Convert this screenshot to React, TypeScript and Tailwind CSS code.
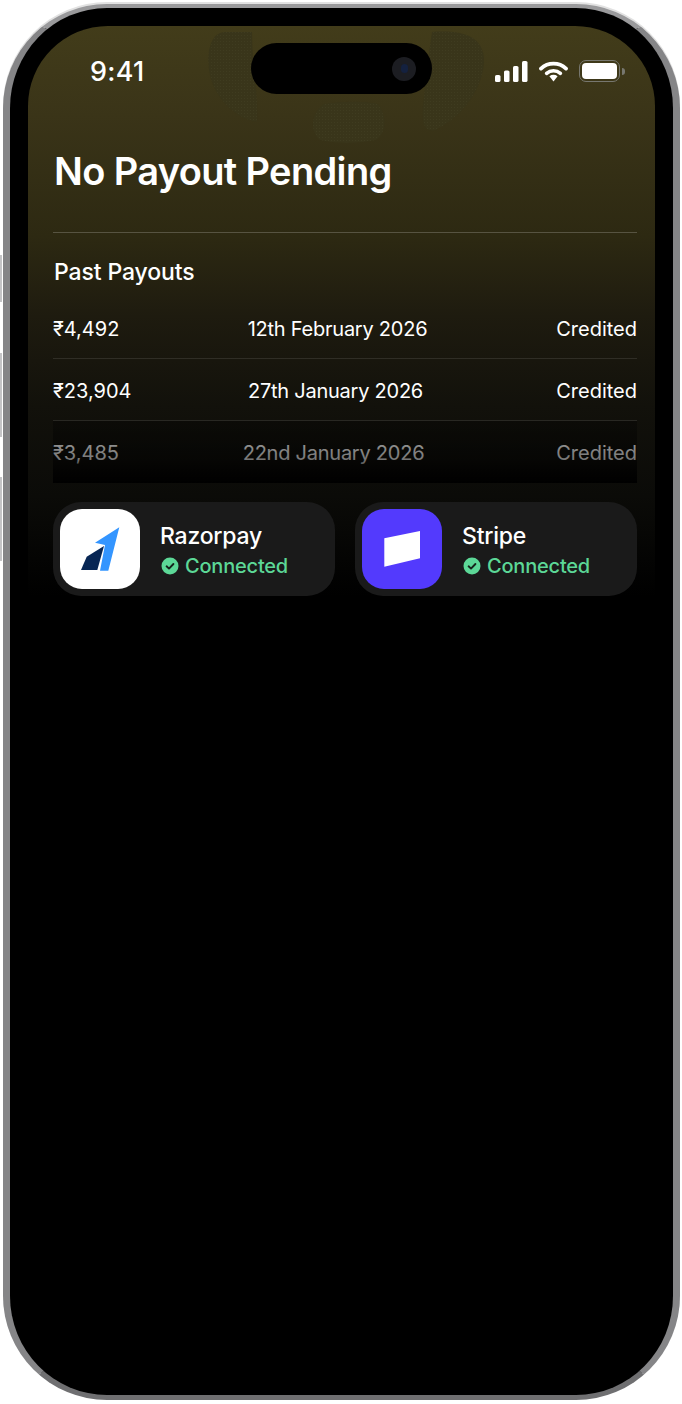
const payouts = [
  { amount: "₹4,492", date: "12th February 2026", dateClass: "pl-[5px]" },
  { amount: "₹23,904", date: "27th January 2026", dateClass: "pl-[1px]" },
  { amount: "₹3,485", date: "22nd January 2026", dateClass: "pr-[3px]" },
];

const Check = () => (
  <svg width="18" height="18" viewBox="0 0 18 18" className="shrink-0">
    <circle cx="9" cy="9" r="8.5" fill="#5cd897" />
    <path d="M5.6 9.3l2.4 2.3 4.4-4.6" fill="none" stroke="#16241c" strokeWidth="1.9" strokeLinecap="round" strokeLinejoin="round" />
  </svg>
);

const Gateway = ({ name, icon, iconClass }: { name: string; icon: React.ReactNode; iconClass: string }) => (
  <div className="flex h-[94px] items-center gap-5 rounded-[28px] bg-[#1a1a1a] pl-[7px]">
    <div className={`h-[80px] w-[80px] shrink-0 rounded-[22px] ${iconClass}`}>{icon}</div>
    <div className="pt-[2px]">
      <div className="text-[23px] leading-[30px] font-medium tracking-[-0.01em] text-white">{name}</div>
      <div className="mt-[1px] flex items-center gap-[6px] pl-[1px] text-[20px] leading-[28px] font-medium tracking-[-0.01em] text-[#5cd897]">
        <Check />
        Connected
      </div>
    </div>
  </div>
);

const StatusIcons = () => (
  <div className="flex items-center">
    {/* signal */}
    <svg width="33" height="21" viewBox="0 0 33 21">
      <rect x="0" y="14" width="5.5" height="7" rx="1.6" fill="#fff" />
      <rect x="9" y="9.5" width="5.5" height="11.5" rx="1.6" fill="#fff" />
      <rect x="18" y="5" width="5.5" height="16" rx="1.6" fill="#fff" />
      <rect x="27" y="0" width="5.5" height="21" rx="1.6" fill="#fff" />
    </svg>
    {/* wifi */}
    <svg width="29" height="21" viewBox="0 0 29 21" className="ml-[11px]">
      <path d="M2 7.6C9 1 20 1 27 7.6" fill="none" stroke="#fff" strokeWidth="3.8" strokeLinecap="round" />
      <path d="M7.6 12.4C11.6 8.8 17.4 8.8 21.4 12.4" fill="none" stroke="#fff" strokeWidth="3.6" strokeLinecap="round" />
      <path d="M10.4 15.2C12.8 13.4 16.2 13.4 18.6 15.2L14.5 20.4Z" fill="#fff" />
    </svg>
    {/* battery */}
    <div className="ml-[11px] flex items-center">
      <div className="h-[22px] w-[41px] rounded-[7px] border-[1.5px] border-[#77776f] p-[2px]">
        <div className="h-full w-full rounded-[4px] bg-white" />
      </div>
      <div className="ml-[2px] h-[7px] w-[3px] rounded-r-full bg-[#77776f]" />
    </div>
  </div>
);

const App = () => {
  return (
    <div className="relative h-[1404px] w-[682px] overflow-hidden bg-white pt-[4px] pl-[3px] font-['Inter',sans-serif]">
      {/* side buttons */}
      <div className="absolute top-[255px] left-0 h-[47px] w-[2px] bg-[#c4c4c6]" />
      <div className="absolute top-[353px] left-0 h-[84px] w-[2px] bg-[#c4c4c6]" />
      <div className="absolute top-[477px] left-0 h-[84px] w-[2px] bg-[#c4c4c6]" />

      {/* phone frame */}
      <div className="flex h-[1396px] w-[677px] flex-col rounded-[104px] border-x-[7px] border-t-[4px] border-b-[5px] border-x-[#858587] border-t-[#9a9a9c] border-b-[#6f6f71] bg-black px-[18px] pt-[18px] shadow-[0_-2px_0_0_#e2e2e2]">
        {/* screen */}
        <div className="relative h-[570px] w-[627px] rounded-t-[80px] bg-[linear-gradient(180deg,#423c1a_0px,#3a3418_90px,#2d2912_210px,#1e1b0f_290px,#12110b_380px,#0b0b08_470px,#000_570px)] pl-[25px]">
          {/* speckled blobs behind the island */}
          <svg width="627" height="140" viewBox="0 0 627 140" className="absolute top-0 left-0">
            <defs>
              <pattern id="dots" width="3" height="3" patternUnits="userSpaceOnUse">
                <rect width="1" height="1" fill="#6f6a4c" opacity="0.12" />
              </pattern>
            </defs>
            <path d="M196 6C178 8 178 40 184 56C192 78 212 94 229 96C231 70 224 40 224 6Z" fill="#39351a" />
            <path d="M196 6C178 8 178 40 184 56C192 78 212 94 229 96C231 70 224 40 224 6Z" fill="url(#dots)" />
            <path d="M404 6C430 4 457 8 456 36C454 66 432 92 408 104C392 108 394 88 396 70C399 40 402 20 404 6Z" fill="#39351a" />
            <path d="M404 6C430 4 457 8 456 36C454 66 432 92 408 104C392 108 394 88 396 70C399 40 402 20 404 6Z" fill="url(#dots)" />
            <path d="M296 78C312 75 340 75 350 78C358 88 360 106 348 114C330 118 306 118 292 114C280 104 284 86 296 78Z" fill="#39351a" />
            <path d="M296 78C312 75 340 75 350 78C358 88 360 106 348 114C330 118 306 118 292 114C280 104 284 86 296 78Z" fill="url(#dots)" />
          </svg>

          {/* dynamic island */}
          <div className="absolute top-[17px] left-[223px] flex h-[51px] w-[181px] items-center justify-end rounded-full bg-black pr-[16px]">
            <div className="flex h-[24px] w-[24px] items-center justify-center rounded-full bg-[#1c1d22]">
              <div className="h-[9px] w-[7px] rounded-full bg-[#14213f]" />
            </div>
          </div>

          {/* status bar */}
          <div className="relative flex h-[90px] items-center justify-between pr-[30px] pl-[37px]">
            <span className="pt-[2px] text-[27px] font-medium tracking-[0.01em] text-white">9:41</span>
            <StatusIcons />
          </div>

          <div className="relative w-[584px]">
            <h1 className="mt-[32px] pl-[1px] text-[38px] leading-[46px] font-semibold tracking-[-0.017em] text-white">
              No Payout Pending
            </h1>
            <div className="mt-[38px] h-px bg-white/20" />
            <h2 className="mt-[24px] pl-[1px] text-[23px] leading-[30px] font-medium tracking-[-0.005em] text-white">
              Past Payouts
            </h2>

            <div className="mt-[10px]">
              {payouts.map((p, i) => (
                <div
                  key={p.amount}
                  className={`relative grid h-[62px] grid-cols-[150px_264px_170px] items-center text-[20px] text-white ${
                    i < payouts.length - 1 ? "border-b border-white/10 pt-[3px]" : "pt-[1px]"
                  }`}
                >
                  <span>{p.amount}</span>
                  <span className={`text-center tracking-[-0.012em] ${p.dateClass}`}>{p.date}</span>
                  <span className="text-right">Credited</span>
                  {i === payouts.length - 1 && (
                    <div className="absolute inset-0 bg-[linear-gradient(180deg,rgba(0,0,0,0.3),rgba(0,0,0,0.52)_60%,#000_100%)]" />
                  )}
                </div>
              ))}
            </div>

            <div className="mt-[19px] grid grid-cols-2 gap-5">
              <Gateway
                name="Razorpay"
                iconClass="bg-white"
                icon={
                  <svg width="80" height="80" viewBox="0 0 80 80">
                    <path d="M59.3 18.3L48.3 61.7H40L45 36L35 33.7Z" fill="#3395ff" />
                    <path d="M44 37L37.3 61H21L26.7 47.7Z" fill="#072654" />
                  </svg>
                }
              />
              <Gateway
                name="Stripe"
                iconClass="bg-[#533afd]"
                icon={
                  <svg width="80" height="80" viewBox="0 0 80 80">
                    <path d="M22.3 29.3L58 22V49.3L22.3 57.7Z" fill="#fff" />
                  </svg>
                }
              />
            </div>
          </div>
        </div>
      </div>
    </div>
  );
};

export default App;
